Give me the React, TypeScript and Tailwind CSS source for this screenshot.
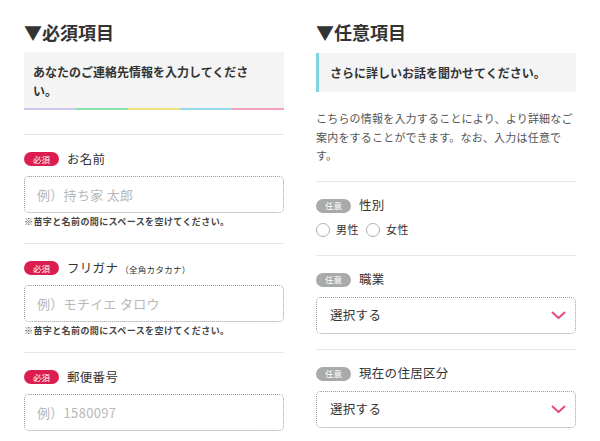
import React from "react";

const font = { fontFamily: '"Noto Sans CJK JP", "Noto Sans", sans-serif' };

function Badge({ required }: { required: boolean }) {
  return (
    <span
      className={`flex h-[14px] w-[35px] shrink-0 items-center justify-center rounded-full text-[8.5px] leading-none text-white ${
        required ? "bg-[#db1d4f]" : "bg-[#aaaaaa]"
      }`}
    >
      {required ? "必須" : "任意"}
    </span>
  );
}

function Field({
  required,
  label,
  sub,
  note,
  children,
}: {
  required: boolean;
  label: string;
  sub?: string;
  note?: string;
  children: React.ReactNode;
}) {
  return (
    <div className="border-t border-[#e6e6e6] pt-[17px] pb-[15px]">
      <div className="flex h-[14px] items-center gap-[8px]">
        <Badge required={required} />
        <span className="text-[12.5px] tracking-[0.3px] text-[#333]">
          {label}
          {sub && <span className="ml-[2px] text-[8.5px]">{sub}</span>}
        </span>
      </div>
      <div className="mt-[10px]">{children}</div>
      {note && (
        <p className="mt-[3px] text-[9px] font-bold leading-[12px] tracking-[0.4px] text-[#444]">
          {note}
        </p>
      )}
    </div>
  );
}

function TextInput({ placeholder }: { placeholder: string }) {
  return (
    <div className="flex h-[37px] items-center rounded-[5px] border border-dotted border-[#999] px-[12px] text-[13px] tracking-[0.3px] text-[#b8b8b8]">
      {placeholder}
    </div>
  );
}

function Select() {
  return (
    <div className="flex h-[37px] items-center justify-between rounded-[5px] border border-dotted border-[#999] pl-[13px] pr-[9px] text-[12.5px] tracking-[0.3px] text-[#333]">
      <span>選択する</span>
      <svg width="15" height="9" viewBox="0 0 15 9">
        <polyline points="1.5,1.5 7.5,7 13.5,1.5" fill="none" stroke="#e8487c" strokeWidth="2" strokeLinecap="round" strokeLinejoin="round" />
      </svg>
    </div>
  );
}

function Radio({ label }: { label: string }) {
  return (
    <label className="flex items-center gap-[6px]">
      <span className="h-[14px] w-[14px] rounded-full border border-[#b0b0b0] bg-white" />
      <span className="text-[11px] tracking-[0.5px] text-[#333]">{label}</span>
    </label>
  );
}

export default function App() {
  return (
    <div className="h-[441px] w-[600px] overflow-hidden bg-white" style={font}>
      <div className="flex gap-[32px] px-[24px] pt-[19px]">
        {/* 必須 */}
        <section className="w-[260px]">
          <h2 className="mb-[7px] text-[18px] font-bold leading-[26px] text-[#333]">▼必須項目</h2>
          <div className="bg-[#f4f4f4]">
            <p className="pt-[10px] pb-[8px] pl-[9px] pr-[15px] text-[12px] font-bold leading-[19px] text-[#333]">
              あなたのご連絡先情報を入力してください。
            </p>
            <div className="flex h-[2px]">
              <div className="flex-1 bg-[#cec8ee]" />
              <div className="flex-1 bg-[#87e2ae]" />
              <div className="flex-1 bg-[#f2e27f]" />
              <div className="flex-1 bg-[#93dbe9]" />
              <div className="flex-1 bg-[#f5a2bf]" />
            </div>
          </div>
          <div className="mt-[24px]">
            <Field required label="お名前" note="※苗字と名前の間にスペースを空けてください。">
              <TextInput placeholder="例）持ち家 太郎" />
            </Field>
            <Field required label="フリガナ" sub="（全角カタカナ）" note="※苗字と名前の間にスペースを空けてください。">
              <TextInput placeholder="例）モチイエ タロウ" />
            </Field>
            <Field required label="郵便番号">
              <TextInput placeholder="例）1580097" />
            </Field>
          </div>
        </section>

        {/* 任意 */}
        <section className="w-[260px]">
          <h2 className="mb-[8px] text-[18px] font-bold leading-[26px] text-[#333]">▼任意項目</h2>
          <div className="border-l-[3px] border-[#80d3e1] bg-[#f4f4f4] py-[10px] pl-[11px] text-[12px] font-bold leading-[19px] text-[#333]">
            さらに詳しいお話を聞かせてください。
          </div>
          <p className="mt-[17px] mb-[16px] text-[11px] leading-[18.5px] tracking-[0.2px] text-[#555]">
            こちらの情報を入力することにより、より詳細なご案内をすることができます。なお、入力は任意です。
          </p>
          <Field required={false} label="性別">
            <div className="mb-[3px] flex h-[14px] items-center gap-[7px]">
              <Radio label="男性" />
              <Radio label="女性" />
            </div>
          </Field>
          <Field required={false} label="職業">
            <Select />
          </Field>
          <Field required={false} label="現在の住居区分">
            <Select />
          </Field>
        </section>
      </div>
    </div>
  );
}
